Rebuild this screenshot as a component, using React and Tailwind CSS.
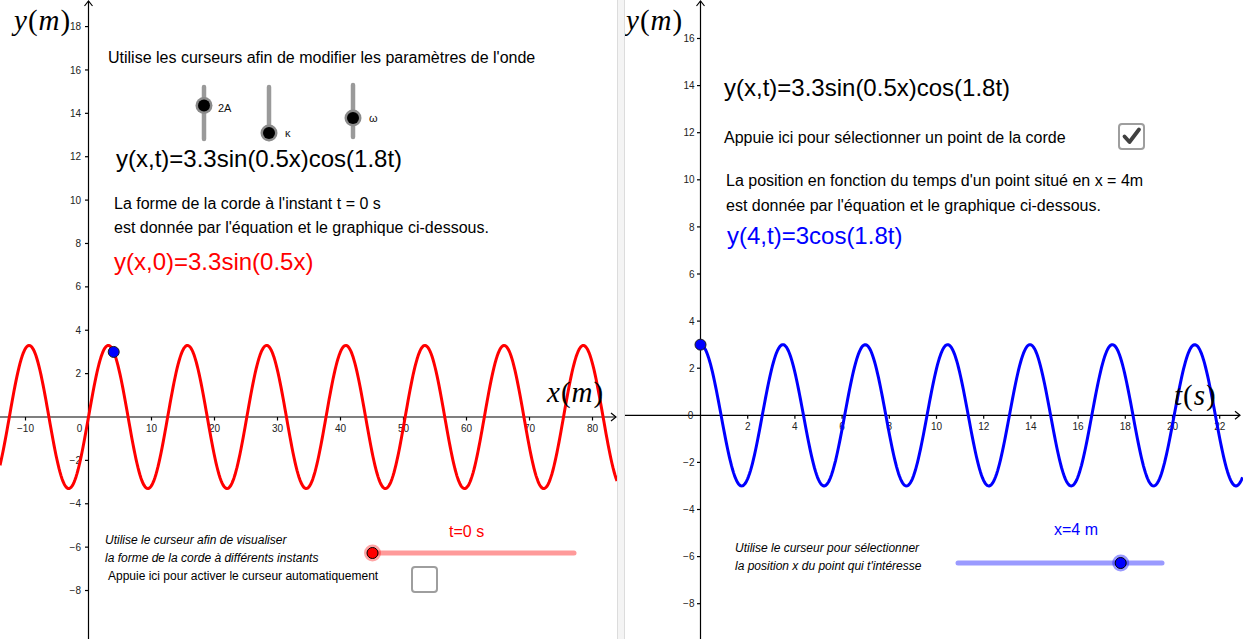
import React from 'react';

const serif = "'Liberation Serif', 'Times New Roman', serif";
const MINUS = '\u2212';

// graph geometry (local px of each panel)
const LEFT = { ox: 88.5, oy: 417, sx: 6.3, sy: 21.69 };
const RIGHT = { ox: 75.5, oy: 415.3, sx: 23.6, sy: 23.55 };

const fmt = (n) => (n < 0 ? MINUS + Math.abs(n) : String(n));

const wave = (g, f, from, to) => {
  let d = '';
  for (let px = from; px <= to; px += 1) {
    const y = g.oy - f((px - g.ox) / g.sx) * g.sy;
    d += (d ? 'L' : 'M') + px.toFixed(1) + ' ' + y.toFixed(1);
  }
  return d;
};

const range = (a, b, step) => {
  const out = [];
  for (let n = a; n <= b; n += step) if (n !== 0) out.push(n);
  return out;
};

const Axes = ({ g, tipX, xTicks, yTicks, yLabelRight, xLabelY, zero }) => (
  <g stroke="#000" strokeWidth="1.2" fill="none">
    <line x1={0} y1={g.oy} x2={tipX} y2={g.oy} />
    <polyline points={`${tipX - 5},${g.oy - 4} ${tipX},${g.oy} ${tipX - 5},${g.oy + 4}`} />
    <line x1={g.ox} y1={1} x2={g.ox} y2={639} />
    <polyline points={`${g.ox - 4},6 ${g.ox},1 ${g.ox + 4},6`} />
    {xTicks.map((n) => {
      const x = g.ox + n * g.sx;
      return (
        <g key={'x' + n}>
          <line x1={x} y1={g.oy} x2={x} y2={g.oy + 3.5} />
          <text x={x} y={xLabelY} textAnchor="middle" fontSize="10" fill="#222" stroke="none">
            {fmt(n)}
          </text>
        </g>
      );
    })}
    {yTicks.map((n) => {
      const y = g.oy - n * g.sy;
      return (
        <g key={'y' + n}>
          <line x1={g.ox - 3.5} y1={y} x2={g.ox} y2={y} />
          <text x={yLabelRight} y={y + 3.6} textAnchor="end" fontSize="10" fill="#222" stroke="none">
            {fmt(n)}
          </text>
        </g>
      );
    })}
    <text x={zero.x} y={zero.y} textAnchor="middle" fontSize="10" fill="#222" stroke="none">0</text>
  </g>
);

// axis titles, LaTeX-like: italic letter, upright brackets
const TeX = ({ x, y, a, b }) => (
  <text x={x} y={y} fontFamily={serif} fontSize="29" letterSpacing="1" fill="#000">
    <tspan fontStyle="italic">{a}</tspan>(<tspan fontStyle="italic">{b}</tspan>)
  </text>
);

const VSlider = ({ x, y1, y2, knob, label, lx, ly }) => (
  <g>
    <line x1={x} y1={y1} x2={x} y2={y2} stroke="#9a9a9a" strokeWidth="4.5" strokeLinecap="round" />
    <circle cx={x} cy={knob} r="8.5" fill="#8a8a8a" />
    <circle cx={x} cy={knob} r="6" fill="#000" />
    <text x={lx} y={ly} fontSize="11" fill="#111">{label}</text>
  </g>
);

const HSlider = ({ x1, x2, y, knob, line, fill, halo }) => (
  <g>
    <line x1={x1} y1={y} x2={x2} y2={y} stroke={line} strokeWidth="5" strokeLinecap="round" />
    <circle cx={knob} cy={y} r="8.5" fill={halo} />
    <circle cx={knob} cy={y} r="5.5" fill={fill} stroke="#000" strokeWidth="1" />
  </g>
);

const Dot = ({ x, y }) => (
  <circle cx={x} cy={y} r="5.5" fill="#0000ff" stroke="#1a1a1a" strokeWidth="1" />
);

const CheckBox = ({ className = '', checked }) => (
  <div className={'w-[27px] h-[27px] shrink-0 rounded-[4px] border-2 border-[#9e9e9e] bg-white ' + className}>
    {checked && (
      <svg width="23" height="23" viewBox="0 0 23 23" className="block">
        <path d="M4.5 11.5 L9.5 17 L19 4.5" fill="none" stroke="#404040" strokeWidth="3.8" strokeLinecap="round" strokeLinejoin="round" />
      </svg>
    )}
  </div>
);

const LeftPanel = () => {
  const g = LEFT;
  return (
    <section className="relative w-[617px] h-full shrink-0">
      <svg className="absolute inset-0" width="617" height="639">
        <Axes
          g={g}
          tipX={616}
          xTicks={range(-10, 80, 10)}
          yTicks={range(-8, 18, 2)}
          yLabelRight={81}
          xLabelY={431.5}
          zero={{ x: 79.5, y: 431.5 }}
        />
        <path d={wave(g, (x) => 3.3 * Math.sin(0.5 * x), 0, 617)} fill="none" stroke="#ff0000" strokeWidth="3" strokeLinejoin="round" />
        <Dot x={g.ox + 4 * g.sx} y={g.oy - 3 * g.sy} />
        <TeX x={14} y={30} a="y" b="m" />
        <TeX x={547} y={402} a="x" b="m" />
        <VSlider x={204} y1={87} y2={139} knob={105.5} label="2A" lx={218} ly={112} />
        <VSlider x={269} y1={87} y2={139} knob={133} label="κ" lx={285} ly={137} />
        <VSlider x={353} y1={85} y2={137} knob={118} label="ω" lx={369} ly={122} />
        <HSlider x1={372} x2={574} y={553} knob={372.5} line="#ff9a9a" fill="#ff0000" halo="rgba(255,0,0,0.35)" />
      </svg>

      <p className="absolute left-[108px] top-[48px] text-[16px] leading-[20px] whitespace-nowrap">
        Utilise les curseurs afin de modifier les paramètres de l'onde
      </p>

      <div className="absolute left-[114px] top-[145px] flex flex-col whitespace-nowrap">
        <p className="ml-[2px] text-[24px] leading-[28px]">y(x,t)=3.3sin(0.5x)cos(1.8t)</p>
        <p className="mt-[19px] text-[16px] leading-[24px]">
          La forme de la corde à l'instant t = 0 s
          <br />
          est donnée par l'équation et le graphique ci-dessous.
        </p>
        <p className="mt-[8px] text-[24px] leading-[28px] text-[#ff0000]">y(x,0)=3.3sin(0.5x)</p>
      </div>

      <div className="absolute left-[105px] top-[531px] flex flex-col text-[12px] leading-[18px] whitespace-nowrap">
        <p className="italic">Utilise le curseur afin de visualiser</p>
        <p className="italic">la forme de la corde à différents instants</p>
        <div className="flex items-start gap-[33px] pl-[3px]">
          <p>Appuie ici pour activer le curseur automatiquement</p>
          <CheckBox className="-mt-px" />
        </div>
      </div>

      <p className="absolute left-[449px] top-[522px] text-[16px] leading-[20px] text-[#ff0000] whitespace-nowrap">t=0 s</p>
    </section>
  );
};

const RightPanel = () => {
  const g = RIGHT;
  return (
    <section className="relative w-[618px] h-full shrink-0">
      <svg className="absolute inset-0" width="618" height="639">
        <Axes
          g={g}
          tipX={615}
          xTicks={range(2, 22, 2)}
          yTicks={range(-8, 16, 2)}
          yLabelRight={69.5}
          xLabelY={429.5}
          zero={{ x: 65.5, y: 419 }}
        />
        <path d={wave(g, (t) => 3 * Math.cos(1.8 * t), g.ox, 618)} fill="none" stroke="#0000ff" strokeWidth="3" strokeLinejoin="round" />
        <Dot x={g.ox} y={g.oy - 3 * g.sy} />
        <TeX x={1} y={30} a="y" b="m" />
        <TeX x={549} y={404.5} a="t" b="s" />
        <HSlider x1={333} x2={537} y={563} knob={495.7} line="#9a9aff" fill="#0000ff" halo="rgba(0,0,255,0.4)" />
      </svg>

      <div className="absolute left-[99px] top-[74px] flex flex-col whitespace-nowrap">
        <p className="text-[24px] leading-[28px]">y(x,t)=3.3sin(0.5x)cos(1.8t)</p>
        <div className="mt-[26px] flex items-start gap-[52px]">
          <p className="text-[16px] leading-[20px]">Appuie ici pour sélectionner un point de la corde</p>
          <CheckBox className="-mt-[5px]" checked />
        </div>
        <p className="mt-[18px] ml-[2px] text-[16px] leading-[25px]">
          La position en fonction du temps d'un point situé en x = 4m
          <br />
          est donnée par l'équation et le graphique ci-dessous.
        </p>
        <p className="mt-[4px] ml-[3px] text-[24px] leading-[28px] text-[#0000ff]">y(4,t)=3cos(1.8t)</p>
      </div>

      <div className="absolute left-[110px] top-[539px] flex flex-col text-[12px] leading-[18px] italic whitespace-nowrap">
        <p>Utilise le curseur pour sélectionner</p>
        <p>la position x du point qui t'intéresse</p>
      </div>

      <p className="absolute left-[429px] top-[520px] text-[16px] leading-[20px] text-[#0000ff] whitespace-nowrap">x=4 m</p>
    </section>
  );
};

export default function App() {
  return (
    <div className="flex w-[1243px] h-[639px] overflow-hidden bg-white text-black font-['Liberation_Sans',Arial,sans-serif]">
      <LeftPanel />
      <div className="w-[8px] h-full shrink-0 bg-[#f4f4f4] border-x border-[#dcdcdc]" />
      <RightPanel />
    </div>
  );
}
